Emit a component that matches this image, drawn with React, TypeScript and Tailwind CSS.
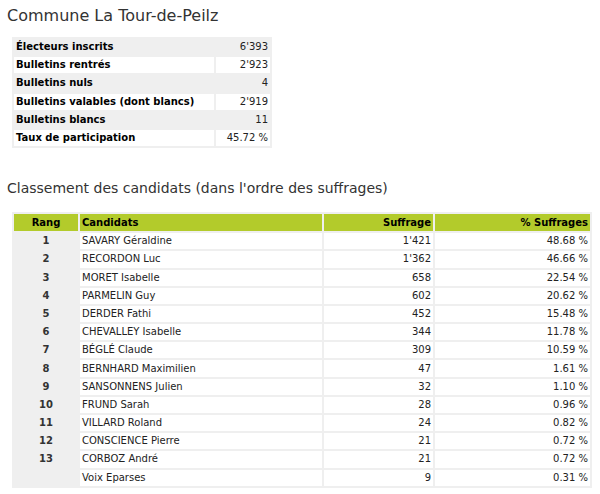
const stats: [string, string][] = [
  ["Électeurs inscrits", "6'393"],
  ["Bulletins rentrés", "2'923"],
  ["Bulletins nuls", "4"],
  ["Bulletins valables (dont blancs)", "2'919"],
  ["Bulletins blancs", "11"],
  ["Taux de participation", "45.72 %"],
];

const candidats: [string, string, string, string][] = [
  ["1", "SAVARY Géraldine", "1'421", "48.68 %"],
  ["2", "RECORDON Luc", "1'362", "46.66 %"],
  ["3", "MORET Isabelle", "658", "22.54 %"],
  ["4", "PARMELIN Guy", "602", "20.62 %"],
  ["5", "DERDER Fathi", "452", "15.48 %"],
  ["6", "CHEVALLEY Isabelle", "344", "11.78 %"],
  ["7", "BÉGLÉ Claude", "309", "10.59 %"],
  ["8", "BERNHARD Maximilien", "47", "1.61 %"],
  ["9", "SANSONNENS Julien", "32", "1.10 %"],
  ["10", "FRUND Sarah", "28", "0.96 %"],
  ["11", "VILLARD Roland", "24", "0.82 %"],
  ["12", "CONSCIENCE Pierre", "21", "0.72 %"],
  ["13", "CORBOZ André", "21", "0.72 %"],
  ["", "Voix Eparses", "9", "0.31 %"],
];

export default function App() {
  return (
    <div className="w-[600px] h-[494px] bg-white px-[7px] pt-[5px] text-[10px] text-[#222] font-['DejaVu_Sans',Verdana,sans-serif]">
      <h1 className="text-[16px] leading-[22px] text-[#333]">Commune La Tour-de-Peilz</h1>

      <table className="mt-[10px] ml-[5px] w-[260px] bg-[#efefef] border-separate border-spacing-[2px]">
        <tbody>
          {stats.map(([label, value], i) => (
            <tr key={label} className={i % 2 === 1 ? "bg-white" : ""}>
              <td className="h-[16.2px] leading-[14px] px-[2px] font-bold text-black whitespace-nowrap">{label}</td>
              <td className="h-[16.2px] leading-[14px] px-[2px] text-right w-[54px] whitespace-nowrap">{value}</td>
            </tr>
          ))}
        </tbody>
      </table>

      <h2 className="mt-[30px] text-[14px] leading-[20px] text-[#333]">
        Classement des candidats (dans l'ordre des suffrages)
      </h2>

      <table className="mt-[14px] ml-[5px] w-[580px] bg-[#efefef] border-separate border-spacing-[2px]">
        <thead>
          <tr className="bg-[#b3cb2b] text-black">
            <th className="h-[17px] leading-[14px] w-[64px] text-center font-bold">Rang</th>
            <th className="h-[17px] leading-[14px] px-[2px] w-[242px] text-left font-bold">Candidats</th>
            <th className="h-[17px] leading-[14px] px-[2px] w-[109px] text-right font-bold">Suffrage</th>
            <th className="h-[17px] leading-[14px] px-[2px] text-right font-bold">% Suffrages</th>
          </tr>
        </thead>
        <tbody>
          {candidats.map(([rang, nom, suffrage, pct]) => (
            <tr key={nom}>
              <td className="h-[16.2px] leading-[14px] text-center font-bold text-[#333]">{rang}</td>
              <td className="h-[16.2px] leading-[14px] px-[2px] bg-white">{nom}</td>
              <td className="h-[16.2px] leading-[14px] px-[2px] bg-white text-right">{suffrage}</td>
              <td className="h-[16.2px] leading-[14px] px-[2px] bg-white text-right">{pct}</td>
            </tr>
          ))}
        </tbody>
      </table>
    </div>
  );
}
